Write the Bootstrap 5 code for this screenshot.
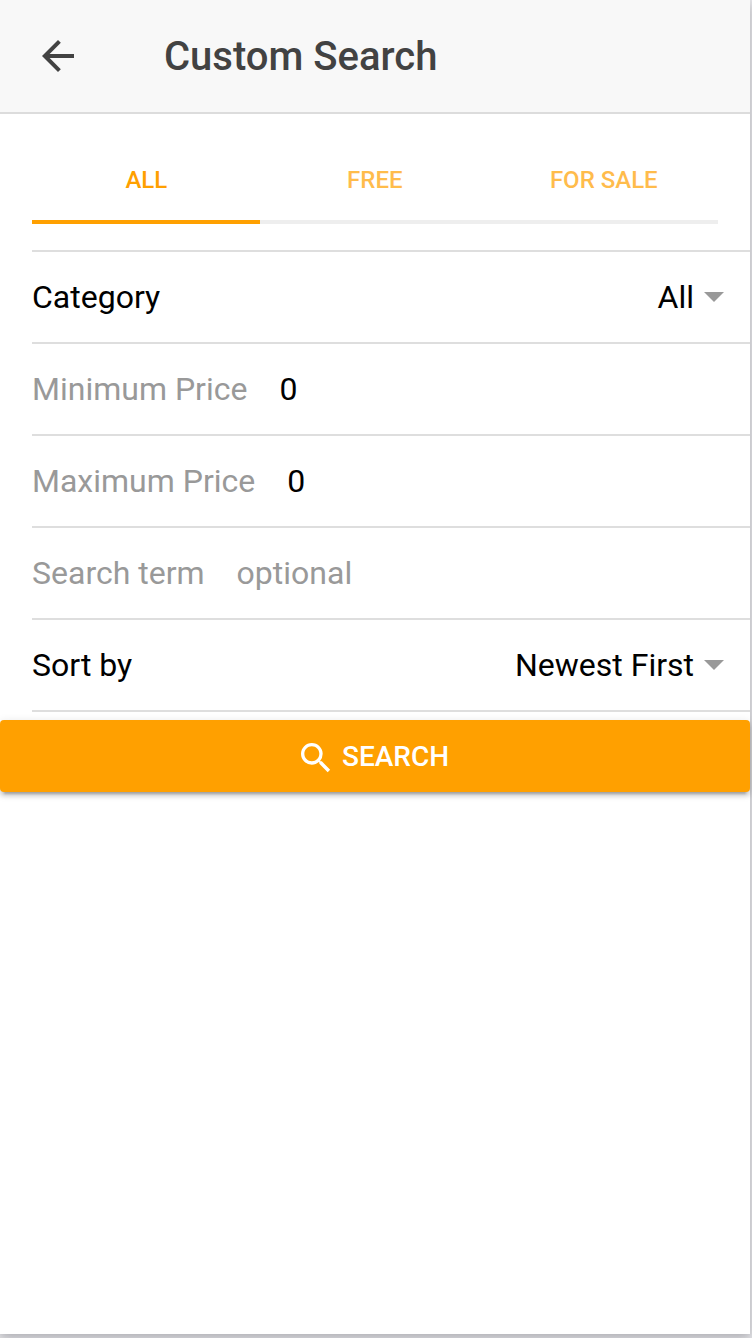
<!DOCTYPE html>
<html lang="en">
<head>
<meta charset="utf-8">
<meta name="viewport" content="width=device-width, initial-scale=1">
<title>Custom Search</title>
<link href="https://cdn.jsdelivr.net/npm/bootstrap@5.3.0/dist/css/bootstrap.min.css" rel="stylesheet">
<style>
  body { font-family: Roboto, sans-serif; background: #e4e4e8; color: #000; min-height: 1338px; }
  .screen { width: 750px; height: 1334px; background: #fff; box-shadow: 0 4px 10px rgba(0, 0, 10, .23); }
  .toolbar { height: 114px; background: #f8f8f8; border-bottom: 2px solid #dcdcdc; color: #424242; padding-left: 42px; }
  .toolbar-title { font-size: 40px; font-weight: 500; line-height: 48px; margin: 0 0 0 90px; padding-top: 2px; }
  .segment { margin: 22px 32px 26px; }
  .segment-tab { height: 88px; font-size: 24px; font-weight: 500; line-height: 80px; color: #ffa000; border: 0; border-bottom: 4px solid #eee; background: none; padding: 4px 0 0 .6px; }
  .segment-tab span { opacity: .7; }
  .segment-tab.active { flex: 0 0 228px; border-color: #ffa000; }
  .segment-tab.active span { opacity: 1; }
  .fields { margin-left: 32px; border-top: 2px solid #dedede; font-size: 32px; line-height: 38px; }
  .field-row { height: 92px; border-bottom: 2px solid #dedede; padding-right: 26px; }
  .field-label { color: #999; margin-right: 32px; }
  .field-value { width: 0; outline: 0; color: #000; }
  .field-value::placeholder { color: #999; opacity: 1; }
  .caret { border: 10px solid transparent; border-top-color: #999; border-bottom: 0; margin-left: 10px; }
  .search-btn { height: 72px; margin-top: 8px; padding: 0 5px 0 0; background: #ffa000; color: #fff; border-radius: 4px; font-size: 28px; font-weight: 500; line-height: 36px;
    box-shadow: 0 4px 4px 0 rgba(0, 0, 0, .14), 0 6px 2px -4px rgba(0, 0, 0, .2), 0 2px 10px 0 rgba(0, 0, 0, .12); }
  .search-btn svg { margin-right: 6px; }
  .search-btn span { padding-top: 2px; }
</style>
</head>
<body>
<main class="screen">
  <header class="toolbar d-flex align-items-center">
    <svg width="32" height="32" viewBox="4 4 16 16" fill="currentColor" aria-hidden="true"><path d="M20 11H7.83l5.59-5.59L12 4l-8 8 8 8 1.41-1.41L7.83 13H20v-2z"/></svg>
    <h1 class="toolbar-title">Custom Search</h1>
  </header>
  <nav class="segment row g-0">
    <button class="segment-tab col active"><span>ALL</span></button>
    <button class="segment-tab col"><span>FREE</span></button>
    <button class="segment-tab col"><span>FOR SALE</span></button>
  </nav>
  <form>
    <div class="fields">
      <div class="field-row d-flex align-items-center"><span>Category</span><span class="ms-auto">All</span><span class="caret"></span></div>
      <label class="field-row d-flex align-items-center"><span class="field-label">Minimum Price</span><input class="field-value flex-grow-1 border-0 p-0" value="0"></label>
      <label class="field-row d-flex align-items-center"><span class="field-label">Maximum Price</span><input class="field-value flex-grow-1 border-0 p-0" value="0"></label>
      <label class="field-row d-flex align-items-center"><span class="field-label">Search term</span><input class="field-value flex-grow-1 border-0 p-0" placeholder="optional"></label>
      <div class="field-row d-flex align-items-center"><span>Sort by</span><span class="ms-auto">Newest First</span><span class="caret"></span></div>
    </div>
    <button type="button" class="search-btn w-100 border-0 d-flex align-items-center justify-content-center">
      <svg class="mt-1" width="40" height="40" viewBox="0 0 24 24" fill="currentColor" aria-hidden="true"><path d="M15.500 14h-.79l-.28-.27A6.471 6.471 0 0 0 16 9.500 6.500 6.500 0 1 0 9.500 16c1.610 0 3.090-.59 4.230-1.570l.27.28v.79l5 4.990L20.490 19l-4.990-5zm-6 0C7.010 14 5 11.990 5 9.500S7.010 5 9.500 5 14 7.010 14 9.500 11.990 14 9.500 14z"/></svg>
      <span>SEARCH</span>
    </button>
  </form>
</main>
<script src="https://cdn.jsdelivr.net/npm/bootstrap@5.3.0/dist/js/bootstrap.bundle.min.js"></script>
</body>
</html>
